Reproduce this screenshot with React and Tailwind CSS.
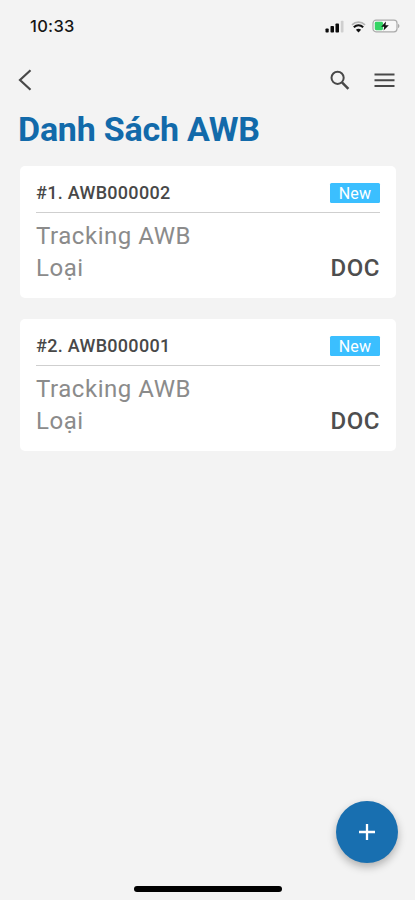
const shipments = [
    { id: 1, code: "AWB000002", status: "New", type: "DOC" },
    { id: 2, code: "AWB000001", status: "New", type: "DOC" },
];

function StatusBar() {
    return (
        <div className="flex h-[52px] items-center justify-between pl-[30px] pr-[15px]">
            <span className="font-['Inter',sans-serif] text-[16.5px] font-medium leading-5 tracking-[0.3px] text-[#161616]">10:33</span>
            <div className="flex items-center">
                <svg width="19" height="13" viewBox="0 0 19 13">
                    <rect x="0.5" y="8.5" width="3.2" height="4" rx="0.8" fill="#0c0c0c" />
                    <rect x="5.5" y="6" width="3.5" height="6.5" rx="0.8" fill="#0c0c0c" />
                    <rect x="10.5" y="3.5" width="3.5" height="9" rx="0.8" fill="#0c0c0c" />
                    <rect x="15.8" y="0.8" width="2.7" height="11.7" rx="0.8" fill="#cfcfcf" />
                </svg>
                <svg className="ml-[7px]" width="15" height="13" viewBox="0 0 15 13" fill="none">
                    <path d="M1 4.8C4.8 1.2 10.2 1.2 14 4.8" stroke="#b5b5b5" strokeWidth="1.8" />
                    <path d="M2.8 7.2C5.6 4.8 9.4 4.8 12.2 7.2" stroke="#111" strokeWidth="2.1" />
                    <path d="M7.5 12.4L4.9 9.8C6.3 8.5 8.7 8.5 10.1 9.8Z" fill="#111" />
                </svg>
                <svg className="ml-[6px]" width="28" height="14" viewBox="0 0 28 14">
                    <rect x="1" y="1.2" width="24" height="11.6" rx="3" fill="#f7f7f7" stroke="#aaa" strokeWidth="1.2" />
                    <rect x="2.8" y="2.8" width="8.2" height="8.4" rx="1.4" fill="#35d565" />
                    <path d="M26.2 4.8C27.8 5.6 27.8 8.4 26.2 9.2Z" fill="#999" />
                    <path d="M14 2.4L9.2 7.8H12.2L11.6 11.6L16.8 6.2H13.5Z" fill="#111" />
                </svg>
            </div>
        </div>
    );
}

function Header() {
    return (
        <div className="flex h-[56px] items-center justify-between pl-[18px] pr-[20px]">
            <button>
                <svg width="14" height="22" viewBox="0 0 14 22" fill="none" stroke="#484848" strokeWidth="2.2">
                    <path d="M12.5 1.2L2 11L12.5 20.8" />
                </svg>
            </button>
            <div className="flex items-center">
                <button>
                    <svg width="21" height="21" viewBox="0 0 21 21" fill="none" stroke="#484848">
                        <circle cx="7.6" cy="7.8" r="6.1" strokeWidth="2" />
                        <path d="M12 12.4L18.4 18.8" strokeWidth="2.5" />
                    </svg>
                </button>
                <button className="ml-[23px]">
                    <svg width="21" height="16" viewBox="0 0 21 16" stroke="#484848" strokeWidth="2">
                        <path d="M0.5 2.5H20.5M0.5 8.3H20.5M0.5 14H20.5" />
                    </svg>
                </button>
            </div>
        </div>
    );
}

function ShipmentCard({ data }) {
    return (
        <div className="h-[132px] rounded-[5px] bg-white px-4 pt-4">
            <div className="flex h-[31px] items-start justify-between border-b border-[#cfcfcf]">
                <p className="text-[18px] font-medium leading-[22px] tracking-[0.3px] text-[#484848]">
                    #{data.id}. {data.code}
                </p>
                <span className="mt-px h-5 w-[50px] rounded-[1.5px] bg-[#3bbfff] text-center text-[16px] leading-[21px] tracking-[0.2px] text-white">
                    {data.status}
                </span>
            </div>
            <div className="mt-[7px] text-[24px] leading-8 tracking-[0.55px] text-[#8b8b8b]">
                <p>Tracking AWB</p>
                <div className="flex justify-between">
                    <p>Loại</p>
                    <p className="font-medium text-[#4e4e4e]">{data.type}</p>
                </div>
            </div>
        </div>
    );
}

export default function App() {
    return (
        <div className="relative h-[900px] w-[415px] overflow-hidden bg-[#f3f3f3] font-['Roboto',sans-serif]">
            <StatusBar />
            <Header />
            <h1 className="pl-[18px] text-[34px] font-bold leading-[42px] tracking-[-0.22px] text-[#126aaa]">
                Danh Sách AWB
            </h1>
            <div className="ml-5 mr-[19px] mt-4 flex flex-col gap-[21px]">
                {shipments.map((data) => (
                    <ShipmentCard key={data.id} data={data} />
                ))}
            </div>

            <button className="absolute bottom-[37px] right-[17px] flex size-[62px] items-center justify-center rounded-full bg-[#186fb0] shadow-[0_4px_8px_rgba(0,0,0,0.28)]">
                <svg width="16" height="16" viewBox="0 0 16 16" stroke="white" strokeWidth="2.3">
                    <path d="M8 0V16M0 8H16" />
                </svg>
            </button>
            <div className="absolute bottom-[8px] left-[134px] h-[6px] w-[148px] rounded-full bg-black" />
        </div>
    );
}
